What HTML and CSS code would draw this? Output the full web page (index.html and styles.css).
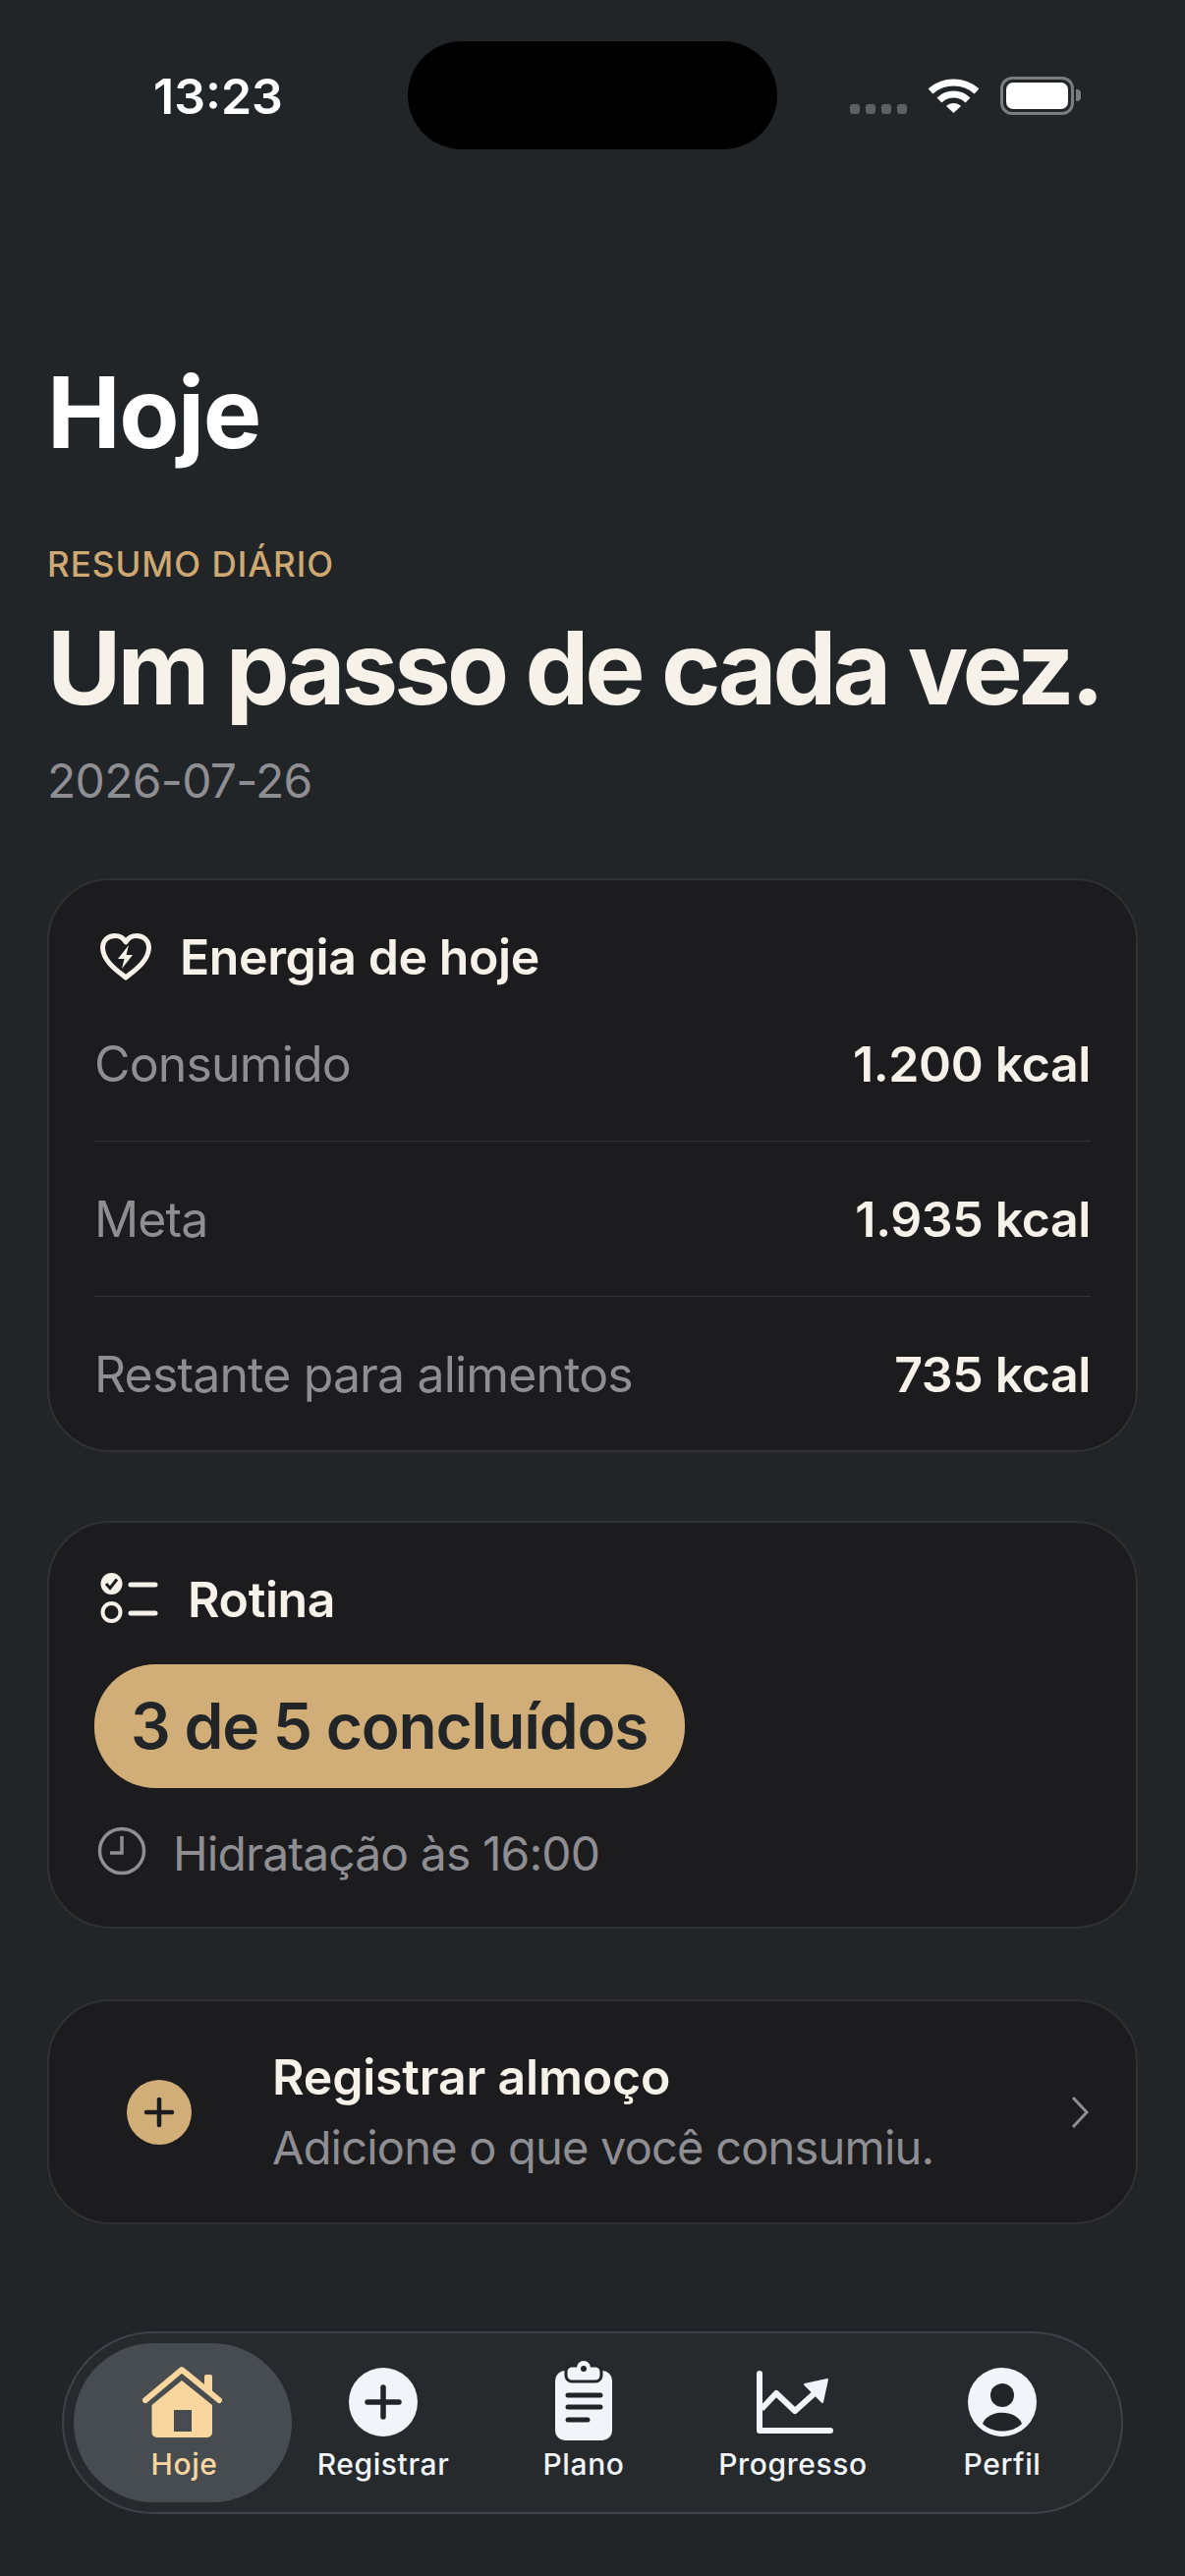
FILE: index.html
```html
<!DOCTYPE html>
<html lang="pt-BR">
<head>
    <meta charset="UTF-8">
    <title>Hoje</title>
    <link rel="stylesheet" href="styles.css">
</head>
<body>
    <div class="status">
        <span class="time">13:23</span>
        <div class="island"></div>
        <div class="status-icons">
            <div class="dots"><i></i><i></i><i></i><i></i></div>
            <svg class="wifi" width="51" height="38" viewBox="0 0 51 38">
                <path d="M2 15 C15 3 36 3 49 15" fill="none" stroke="#fff" stroke-width="7"/>
                <path d="M11 24 C19 16 32 16 40 24" fill="none" stroke="#fff" stroke-width="7"/>
                <path d="M18 30 C22 26 29 26 33 30 L25.500 37 Z" fill="#fff"/>
            </svg>
            <div class="battery"><div class="battery-fill"></div></div>
            <div class="battery-nub"></div>
        </div>
    </div>

    <main class="content">
        <h1 class="page-title">Hoje</h1>
        <p class="eyebrow">RESUMO DIÁRIO</p>
        <h2 class="headline">Um passo de cada vez.</h2>
        <p class="date">2026-07-26</p>

        <section class="card energy">
            <div class="card-title">
                <svg class="icon-heart" width="61" height="60" viewBox="0 0 61 60">
                    <path d="M32 51 C25 45 9 35 8.500 21 C8.500 13 14 8.500 21 8.500 C26 8.500 30 11 32 15 C34 11 38 8.500 43 8.500 C50 8.500 55.500 13 55.500 21 C55 35 39 45 32 51 Z" fill="none" stroke="#f6f2e9" stroke-width="5" stroke-linejoin="round"/>
                    <path d="M35 18 L24 32 H30.500 L28 42 L39 28 H32.500 Z" fill="#f6f2e9"/>
                </svg>
                <span>Energia de hoje</span>
            </div>
            <div class="row">
                <span class="row-label">Consumido</span>
                <span class="row-value">1.200 kcal</span>
            </div>
            <div class="row">
                <span class="row-label">Meta</span>
                <span class="row-value">1.935 kcal</span>
            </div>
            <div class="row">
                <span class="row-label">Restante para alimentos</span>
                <span class="row-value">735 kcal</span>
            </div>
        </section>

        <section class="card routine">
            <div class="card-title">
                <svg class="icon-list" width="69" height="60" viewBox="0 0 69 60">
                    <circle cx="17.500" cy="14" r="11" fill="#f6f2e9"/>
                    <path d="M12 14 L16 18.500 L23 9.500" fill="none" stroke="#1c1c1e" stroke-width="3"/>
                    <circle cx="17.500" cy="43" r="9" fill="none" stroke="#f6f2e9" stroke-width="4"/>
                    <path d="M37 15 H62 M37 44 H62" stroke="#f6f2e9" stroke-width="5" stroke-linecap="round"/>
                </svg>
                <span>Rotina</span>
            </div>
            <div class="pill">3 de 5 concluídos</div>
            <div class="reminder">
                <svg width="60" height="60" viewBox="0 0 60 60">
                    <circle cx="28" cy="28" r="22.500" fill="none" stroke="#8e8e93" stroke-width="3.500"/>
                    <path d="M28 13 V30 H16" fill="none" stroke="#8e8e93" stroke-width="3.500"/>
                </svg>
                <span>Hidratação às 16:00</span>
            </div>
        </section>

        <section class="card action">
            <div class="plus-badge">
                <svg width="32" height="32" viewBox="0 0 32 32">
                    <path d="M16 3 V29 M3 16 H29" stroke="#1c1c1e" stroke-width="4.500" stroke-linecap="round"/>
                </svg>
            </div>
            <div class="action-text">
                <div class="action-title">Registrar almoço</div>
                <div class="action-sub">Adicione o que você consumiu.</div>
            </div>
            <svg class="chevron" width="20" height="34" viewBox="0 0 20 34">
                <path d="M3 2 L17 17 L3 32" fill="none" stroke="#8e8e93" stroke-width="3"/>
            </svg>
        </section>
    </main>

    <nav class="tabbar">
        <div class="tab tab-active">
            <svg width="88" height="84" viewBox="0 0 88 84">
                <path d="M41 20 L72 45 V73 A5 5 0 0 1 67 78 H15.500 A5 5 0 0 1 10.500 73 V45 Z M33 50 V72 H51 V50 Z" fill="#f9d69e" fill-rule="evenodd"/>
                <path d="M4 40 L41 9 L79 40" fill="none" stroke="#f9d69e" stroke-width="6" stroke-linecap="round" stroke-linejoin="round"/>
                <rect x="64" y="14" width="8" height="18" rx="2" fill="#f9d69e"/>
            </svg>
            <span>Hoje</span>
        </div>
        <div class="tab">
            <svg width="84" height="84" viewBox="0 0 84 84">
                <circle cx="42" cy="42" r="35" fill="#f1f5f9"/>
                <path d="M42 27 V57 M26 42 H58" stroke="#212528" stroke-width="5.500" stroke-linecap="round"/>
            </svg>
            <span>Registrar</span>
        </div>
        <div class="tab">
            <svg width="84" height="84" viewBox="0 0 84 84">
                <rect x="13" y="10" width="58" height="71" rx="10" fill="#f1f5f9"/>
                <rect x="24" y="5" width="36" height="16" rx="6" fill="#f1f5f9" stroke="#212528" stroke-width="3"/>
                <circle cx="42" cy="7" r="7" fill="#f1f5f9"/>
                <circle cx="42" cy="8" r="3" fill="#212528"/>
                <path d="M26 35 H59 M26 47 H59 M26 60 H46" stroke="#212528" stroke-width="5" stroke-linecap="round"/>
            </svg>
            <span>Plano</span>
        </div>
        <div class="tab">
            <svg width="84" height="84" viewBox="0 0 84 84">
                <path d="M8 13 V71 H80" fill="none" stroke="#f1f5f9" stroke-width="6" stroke-linecap="round" stroke-linejoin="round"/>
                <path d="M10 49 L25 33 L44 51 L64 33" fill="none" stroke="#f1f5f9" stroke-width="6" stroke-linejoin="round"/>
                <path d="M77 19 L54 24 L72 42 Z" fill="#f1f5f9" stroke="#f1f5f9" stroke-width="2" stroke-linejoin="round"/>
            </svg>
            <span>Progresso</span>
        </div>
        <div class="tab">
            <svg width="84" height="84" viewBox="0 0 84 84">
                <circle cx="42" cy="42" r="35" fill="#f1f5f9"/>
                <circle cx="42" cy="35" r="12" fill="#212528"/>
                <path d="M22 64 C28 49 56 49 62 64 C52 74 32 74 22 64 Z" fill="#212528"/>
            </svg>
            <span>Perfil</span>
        </div>
    </nav>
</body>
</html>
```

FILE: styles.css
```css
* {
    box-sizing: border-box;
}
html, body {
    margin: 0;
    padding: 0;
}
body {
    width: 1206px;
    height: 2622px;
    overflow: hidden;
    background-color: #212528;
    font-family: "Inter", "Liberation Sans", sans-serif;
    color: #f6f2e9;
}
p, h1, h2 {
    margin: 0;
}

/* status bar */
.status {
    display: grid;
    grid-template-columns: 415px 376px 1fr;
    height: 110px;
    margin-top: 42px;
    align-items: center;
}
.time {
    padding: 2px 0 0 156px;
    font-size: 50px;
    font-weight: 600;
    line-height: 60px;
    color: #fff;
}
.island {
    height: 110px;
    border-radius: 55px;
    background-color: #000;
}
.status-icons {
    display: flex;
    align-items: flex-start;
    height: 110px;
    padding: 36px 0 0 74px;
}
.dots {
    display: flex;
    gap: 6px;
    margin-top: 28px;
}
.dots i {
    display: block;
    width: 10px;
    height: 10px;
    border-radius: 3px;
    background-color: #5e6163;
}
.wifi {
    margin-left: 22px;
}
.battery {
    width: 75px;
    height: 39px;
    margin-left: 22px;
    padding: 3px;
    border: 3px solid #7a7c7e;
    border-radius: 12px;
}
.battery-fill {
    height: 100%;
    border-radius: 7px;
    background-color: #fff;
}
.battery-nub {
    width: 5px;
    height: 12px;
    margin: 13px 0 0 2px;
    border-radius: 0 4px 4px 0;
    background-color: #7a7c7e;
}

/* heading */
.content {
    padding: 0 48px;
}
.page-title {
    margin-top: 208px;
    font-size: 100px;
    font-weight: 700;
    line-height: 120px;
    letter-spacing: -1.5px;
    color: #fff;
}
.eyebrow {
    margin-top: 74px;
    font-size: 35px;
    font-weight: 550;
    line-height: 40px;
    letter-spacing: 1px;
    color: #cfa971;
}
.headline {
    margin-top: 28px;
    font-size: 103px;
    font-weight: 700;
    line-height: 116px;
    letter-spacing: -4px;
    white-space: nowrap;
}
.date {
    margin-top: 33px;
    font-size: 48px;
    line-height: 48px;
    letter-spacing: -0.7px;
    color: #8e8e93;
}

/* cards */
.card {
    border: 2px solid #303130;
    border-radius: 64px;
    background-color: #1c1c1e;
}
.energy {
    height: 584px;
    margin-top: 75px;
    padding: 48px 46px 0;
}
.routine {
    height: 415px;
    margin-top: 70px;
    padding: 48px 46px 0;
}
.action {
    display: flex;
    align-items: center;
    height: 229px;
    margin-top: 72px;
    padding: 0 47px 0 79px;
}
.card-title {
    display: flex;
    align-items: center;
    gap: 26px;
    height: 60px;
    font-size: 50px;
    font-weight: 570;
    letter-spacing: -0.4px;
}
.row {
    display: flex;
    justify-content: space-between;
    height: 158px;
    padding-top: 49px;
    border-bottom: 1px solid #333436;
    font-size: 50px;
    line-height: 60px;
}
.row:last-child {
    border-bottom: 0;
}
.row-label {
    letter-spacing: -0.85px;
    color: #8e8e93;
}
.row-value {
    font-weight: 570;
    letter-spacing: -0.35px;
}
.pill {
    display: inline-block;
    height: 126px;
    margin-top: 36px;
    padding: 0 38px 0 37px;
    border-radius: 62px;
    background-color: #d1ad78;
    color: #212528;
    font-size: 64px;
    font-weight: 570;
    line-height: 126px;
    letter-spacing: -1.2px;
}
.reminder {
    display: flex;
    align-items: center;
    gap: 20px;
    height: 60px;
    margin-top: 36px;
    font-size: 48px;
    letter-spacing: -0.9px;
    color: #8e8e93;
}
.plus-badge {
    display: flex;
    align-items: center;
    justify-content: center;
    width: 66px;
    height: 66px;
    border-radius: 50%;
    background-color: #d1ad78;
}
.action-text {
    flex: 1;
    margin-left: 82px;
}
.action-title {
    font-size: 50px;
    font-weight: 570;
    line-height: 60px;
    letter-spacing: -0.2px;
}
.action-sub {
    margin-top: 12px;
    font-size: 47px;
    line-height: 60px;
    letter-spacing: -0.8px;
    color: #8e8e93;
}

/* tab bar */
.tabbar {
    display: grid;
    grid-template-columns: 222px 186px 222px 204px 222px;
    width: 1080px;
    height: 186px;
    margin: 109px 0 0 63px;
    padding: 10px;
    border: 2px solid #3f4347;
    border-radius: 93px;
    background-color: #262a2d;
}
.tab {
    display: flex;
    flex-direction: column;
    align-items: center;
    height: 162px;
    padding-top: 18px;
    border-radius: 81px;
    font-size: 30px;
    font-weight: 450;
    line-height: 42px;
    letter-spacing: 0.6px;
    color: #f1f5f9;
}
.tab svg {
    flex: none;
}
.tab-active {
    padding-left: 3px;
    background-color: #474c50;
    color: #f9d69e;
}
```
